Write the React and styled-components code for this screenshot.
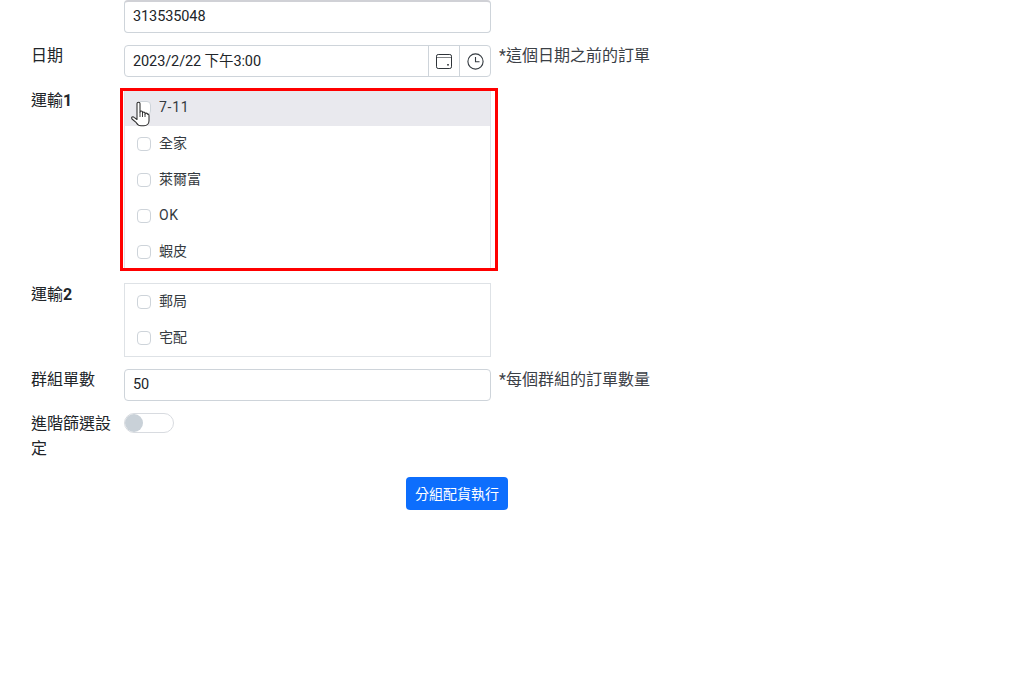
import React from 'react';
import styled, {createGlobalStyle} from 'styled-components';

const GlobalStyle = createGlobalStyle`
  html, body {
    margin: 0;
    height: 100%;
    overflow: hidden;
    background: #fff;
  }
  body {
    font-family: Roboto, "Noto Sans CJK TC", sans-serif;
    font-size: 16px;
    color: #212529;
  }
`

const Form = styled.form`
  width: 883px;
  padding-left: 31px;
  box-sizing: border-box;
  display: flex;
  flex-direction: column;
  gap: 12px;
`
const Row = styled.div`
  display: flex;
  align-items: flex-start;
`
const Label = styled.label`
  width: 81px;
  margin: -2px 12px 0 0;
  line-height: 25px;
  flex: none;
`
const ListLabel = styled(Label)`
  margin-top: -1px;
`
const BoldDigit = styled.b`
  font-weight: 700;
`
const Input = styled.div`
  box-sizing: border-box;
  width: 367px;
  height: ${p => p.$first ? '33px' : '32px'};
  padding: 0 8px 2px;
  display: flex;
  align-items: center;
  background: #fff;
  border: 1px solid #ced4da;
  border-top: ${p => p.$first ? '2px solid #d0d1d6' : '1px solid #ced4da'};
  border-radius: 4px;
  font-size: 14.5px;
  letter-spacing: -0.1px;
`
const DateGroup = styled.div`
  box-sizing: border-box;
  width: 367px;
  height: 32px;
  display: flex;
  border: 1px solid #ced4da;
  border-radius: 4px;
`
const DateValue = styled.div`
  flex: 1;
  padding: 0 8px 3px;
  display: flex;
  align-items: center;
  font-size: 14.5px;
  letter-spacing: -0.1px;
`
const Addon = styled.div`
  width: 31px;
  display: flex;
  align-items: center;
  justify-content: center;
  border-left: 1px solid #ced4da;
  box-sizing: border-box;
  color: #343a40;
`
const Hint = styled.span`
  margin: -2px 0 0 8px;
  line-height: 25px;
  color: #3b4046;
`
const ListWrap = styled.div`
  position: relative;
  width: 367px;
`
const List = styled.div`
  box-sizing: border-box;
  border: 1px solid #dee2e6;
`
const Option = styled.div`
  height: 36px;
  padding-left: 12px;
  display: flex;
  align-items: center;
  gap: 8px;
  font-size: 14px;
  color: #343a40;
  background: ${p => p.$hover ? '#e9e9ee' : 'transparent'};
`
const OptionText = styled.span`
  margin-bottom: ${p => p.$latin ? '2px' : '4px'};
  letter-spacing: ${p => p.$latin ? '0.7px' : '0'};
`
const Check = styled.span`
  box-sizing: border-box;
  width: 14px;
  height: 14px;
  background: #fff;
  border: 1px solid #ced4da;
  border-radius: 4px;
  flex: none;
`
const RedFrame = styled.div`
  position: absolute;
  top: -1px;
  left: -4px;
  right: -7px;
  bottom: 0;
  border: 3px solid #f00;
  pointer-events: none;
`
const Cursor = styled.svg`
  position: absolute;
  left: 7px;
  top: 12px;
`
const Switch = styled.span`
  box-sizing: border-box;
  display: block;
  width: 50px;
  height: 20px;
  border: 1px solid #d8dbe0;
  border-radius: 10px;
  position: relative;
  &::before {
    content: '';
    position: absolute;
    left: 0;
    top: 0;
    width: 18px;
    height: 18px;
    border-radius: 50%;
    background: #c9d1d8;
  }
`
const Actions = styled.div`
  display: flex;
  justify-content: center;
  margin-top: 4px;
`
const Submit = styled.button`
  width: 102px;
  height: 33px;
  padding: 0 0 2px;
  border: 0;
  border-radius: 4px;
  background: #0d6efd;
  color: #fff;
  font: 14px Roboto, "Noto Sans CJK TC", sans-serif;
`

function CheckRow({text, hover, latin}) {
  return (
    <Option $hover={hover}>
      <Check/>
      <OptionText $latin={latin}>{text}</OptionText>
    </Option>
  )
}

export default function App() {
  return (
    <>
      <GlobalStyle/>
      <Form onSubmit={e => e.preventDefault()}>
        <Row>
          <Label/>
          <Input $first>313535048</Input>
        </Row>
        <Row>
          <Label>日期</Label>
          <DateGroup>
            <DateValue>2023/2/22 下午3:00</DateValue>
            <Addon>
              <svg width="16" height="16" viewBox="0 0 16 16" fill="none" stroke="#2f3439" strokeWidth="1">
                <path d="M2.200 1.500h11.600a1.700 1.700 0 0 1 1.700 1.700v10.600a1.700 1.700 0 0 1-1.700 1.700H2.200a1.700 1.700 0 0 1-1.700-1.700V3.200a1.700 1.700 0 0 1 1.700-1.700z"/>
                <path d="M.5 4.500h15" strokeOpacity="0.6"/>
                <rect x="11.200" y="11" width="1.600" height="1.600" fill="#2f3439" stroke="none"/>
              </svg>
            </Addon>
            <Addon>
              <svg width="17" height="17" viewBox="0 0 17 17" fill="none" stroke="currentColor" strokeWidth="1.1">
                <circle cx="8.500" cy="8.500" r="7.600"/>
                <path d="M8.500 4v4.800h4"/>
              </svg>
            </Addon>
          </DateGroup>
          <Hint>*這個日期之前的訂單</Hint>
        </Row>
        <Row>
          <ListLabel>運輸<BoldDigit>1</BoldDigit></ListLabel>
          <ListWrap>
            <List>
              <CheckRow text="7-11" hover latin/>
              <CheckRow text="全家"/>
              <CheckRow text="萊爾富"/>
              <CheckRow text="OK" latin/>
              <CheckRow text="蝦皮"/>
            </List>
            <RedFrame/>
            <Cursor width="20" height="26" viewBox="0 0 20 26">
              <path d="M6 2.500c0-1.800 3-1.800 3 0V11c0-1.400 2.500-1.400 2.500 0v1c0-1.300 2.500-1.300 2.500 0v1c0-1.200 2.500-1.200 2.500 .2 1-.3 1.500 .5 1.500 1.500v5c0 2.600-1.900 5-5 5h-3c-2.600 0-3.700-1.300-4.700-3L1 18c-1-1.700.8-3 2.100-1.700L6 18.500z" fill="#fff" stroke="#2b2b2b" strokeWidth="1.050" strokeLinejoin="round"/>
              <path d="M9 11v5M11.500 12v4M14 13v3" stroke="#2b2b2b" strokeWidth="0.900" fill="none"/>
            </Cursor>
          </ListWrap>
        </Row>
        <Row>
          <ListLabel>運輸<BoldDigit>2</BoldDigit></ListLabel>
          <ListWrap>
            <List>
              <CheckRow text="郵局"/>
              <CheckRow text="宅配"/>
            </List>
          </ListWrap>
        </Row>
        <Row>
          <Label>群組單數</Label>
          <Input>50</Input>
          <Hint>*每個群組的訂單數量</Hint>
        </Row>
        <Row>
          <Label>進階篩選設定</Label>
          <Switch/>
        </Row>
        <Actions>
          <Submit type="submit">分組配貨執行</Submit>
        </Actions>
      </Form>
    </>
  )
}
